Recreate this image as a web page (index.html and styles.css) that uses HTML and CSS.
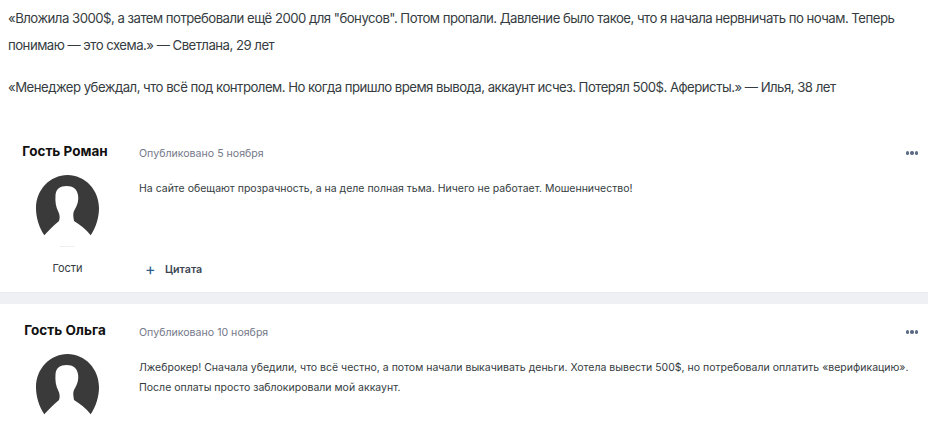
FILE: index.html
```html
<!DOCTYPE html>
<html lang="ru">
<head>
    <meta charset="UTF-8">
    <title>Отзывы</title>
    <link rel="stylesheet" href="styles.css">
</head>
<body>
    <div class="quotes">
        <p>«Вложила 3000$, а затем потребовали ещё 2000 для "бонусов". Потом пропали. Давление было такое, что я начала нервничать по ночам. Теперь понимаю — это схема.» — Светлана, 29 лет</p>
        <p>«Менеджер убеждал, что всё под контролем. Но когда пришло время вывода, аккаунт исчез. Потерял 500$. Аферисты.» — Илья, 38 лет</p>
    </div>

    <div class="comment first">
        <div class="author">
            <h3>Гость Роман</h3>
            <svg class="avatar" viewBox="0 0 63 72"><path d="M8.300 60.300C3 52 0 43 0 33 0 15 14 0 31.500 0 49 0 63 15 63 33c0 10-3 19-8.300 27.300C50 54 44 50 38 46c-1-5-1-8 0-10 3-5 5-10 4-16-1-6-5-9-11.300-9C24 11 20 14 19.500 20c-.5 7 .5 12 2.500 16 2 4 2 7 1 10-5 4-10 9-14.700 14.300z" fill="#3a3a3a"/><path d="M24 71.500h14" stroke="#eeeeee" fill="none"/></svg>
            <span class="group">Гости</span>
        </div>
        <div class="body">
            <div class="meta">
                <span>Опубликовано 5 ноября</span>
                <span class="more"><i></i><i></i><i></i></span>
            </div>
            <p class="text">На сайте обещают прозрачность, а на деле полная тьма. Ничего не работает. Мошенничество!</p>
            <div class="actions"><span class="plus">+</span><span class="quote">Цитата</span></div>
        </div>
    </div>

    <div class="comment second">
        <div class="author">
            <h3>Гость Ольга</h3>
            <svg class="avatar" viewBox="0 0 63 72"><path d="M8.300 60.300C3 52 0 43 0 33 0 15 14 0 31.500 0 49 0 63 15 63 33c0 10-3 19-8.300 27.300C50 54 44 50 38 46c-1-5-1-8 0-10 3-5 5-10 4-16-1-6-5-9-11.300-9C24 11 20 14 19.500 20c-.5 7 .5 12 2.500 16 2 4 2 7 1 10-5 4-10 9-14.700 14.300z" fill="#3a3a3a"/></svg>
        </div>
        <div class="body">
            <div class="meta">
                <span>Опубликовано 10 ноября</span>
                <span class="more"><i></i><i></i><i></i></span>
            </div>
            <p class="text">Лжеброкер! Сначала убедили, что всё честно, а потом начали выкачивать деньги. Хотела вывести 500$, но потребовали оплатить «верификацию». После оплаты просто заблокировали мой аккаунт.</p>
        </div>
    </div>
</body>
</html>
```

FILE: styles.css
```css
html, body {
    height: 426px;
    overflow: hidden;
}
body {
    margin: 0;
    font-family: Inter, "Noto Sans", sans-serif;
    color: #353c41;
    background-color: #fff;
}
.quotes {
    padding: 5px 8px 0;
    height: 127px;
    box-sizing: border-box;
}
.quotes p {
    margin: 0 0 15px;
    font-size: 13.200px;
    letter-spacing: -0.52px;
    line-height: 27px;
}
.comment {
    display: flex;
    box-sizing: border-box;
}
.first {
    height: 177px;
    padding-top: 14px;
    border-bottom: 11px solid #eef0f4;
    box-shadow: inset 0 -1px 0 #e6e9ee;
}
.second {
    height: 122px;
    padding-top: 16px;
}
.author {
    width: 130px;
    flex-shrink: 0;
    display: flex;
    flex-direction: column;
    align-items: center;
}
.author h3 {
    margin: 0;
    font-size: 13.500px;
    line-height: 20px;
    font-weight: 700;
    color: #111;
}
.avatar {
    width: 63px;
    height: 72px;
    margin-top: 14px;
    margin-left: 5px;
    flex-shrink: 0;
}
.group {
    margin-top: 13px;
    margin-left: 5px;
    font-size: 11px;
    line-height: 16px;
}
.body {
    flex: 1;
    padding: 0 10px 0 9px;
}
.meta {
    display: flex;
    justify-content: space-between;
    align-items: center;
    height: 20px;
    margin-top: 2px;
    font-size: 10.600px;
    color: #75798a;
}
.more {
    display: flex;
    gap: 1px;
}
.more i {
    width: 3.500px;
    height: 3.500px;
    border-radius: 50%;
    background-color: #5c6b85;
}
.text {
    margin: 16px 0 0;
    font-size: 10.500px;
    line-height: 20px;
    color: #353c41;
}
.actions {
    display: flex;
    align-items: center;
    height: 20px;
    margin-top: 60px;
    padding-left: 6px;
}
.plus {
    width: 20px;
    font-size: 16px;
    color: #2d5f8e;
}
.quote {
    font-size: 10.700px;
    font-weight: 600;
    color: #3c4552;
}
```
